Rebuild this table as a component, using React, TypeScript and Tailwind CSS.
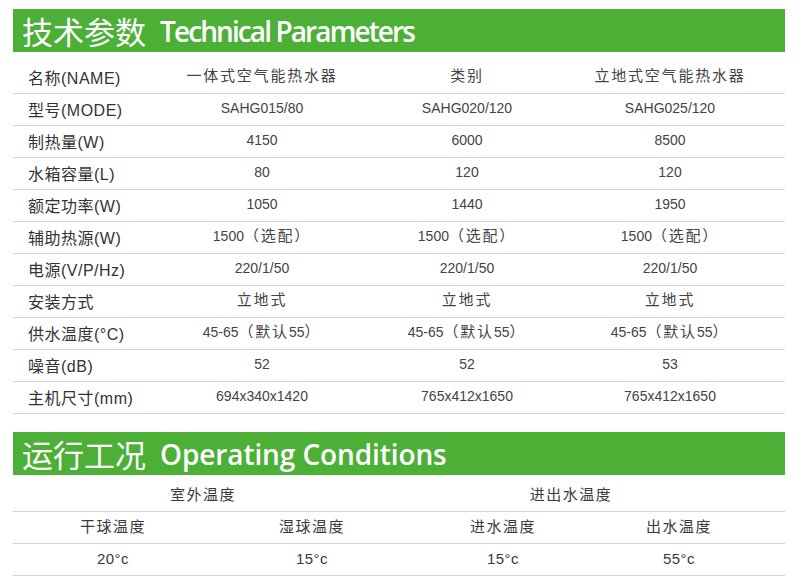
const body = '"Liberation Sans", "Noto Sans CJK SC", sans-serif';

type Row = { label: string; values: string[] };

const specs: Row[] = [
  { label: '名称(NAME)', values: ['一体式空气能热水器', '类别', '立地式空气能热水器'] },
  { label: '型号(MODE)', values: ['SAHG015/80', 'SAHG020/120', 'SAHG025/120'] },
  { label: '制热量(W)', values: ['4150', '6000', '8500'] },
  { label: '水箱容量(L)', values: ['80', '120', '120'] },
  { label: '额定功率(W)', values: ['1050', '1440', '1950'] },
  { label: '辅助热源(W)', values: ['1500（选配）', '1500（选配）', '1500（选配）'] },
  { label: '电源(V/P/Hz)', values: ['220/1/50', '220/1/50', '220/1/50'] },
  { label: '安装方式', values: ['立地式', '立地式', '立地式'] },
  { label: '供水温度(°C)', values: ['45-65（默认55）', '45-65（默认55）', '45-65（默认55）'] },
  { label: '噪音(dB)', values: ['52', '52', '53'] },
  { label: '主机尺寸(mm)', values: ['694x340x1420', '765x412x1650', '765x412x1650'] },
];

// cjk runs get a bit of letter spacing, latin runs stay tight
function Value({ text }: { text: string }) {
  const parts = text.split(/([\u3000-\u303f\u4e00-\u9fff\uff00-\uffef]+)/).filter(Boolean);
  return (
    <span className="pb-[2px] text-center text-[14px] text-[#444]">
      {parts.map((p, i) =>
        /[\u3000-\u303f\u4e00-\u9fff\uff00-\uffef]/.test(p) ? (
          <span key={i} className="text-[15px] tracking-[1.8px]">
            {p}
          </span>
        ) : (
          <span key={i}>{p}</span>
        ),
      )}
    </span>
  );
}

function SectionBar({ zh, en, track }: { zh: string; en: string; track: string }) {
  return (
    <div className="flex h-[43px] items-center gap-[14px] bg-[#4cb037] pl-[9px] text-white">
      <span className="text-[31px] leading-none" style={{ fontFamily: '"Noto Sans CJK SC", sans-serif' }}>
        {zh}
      </span>
      <span
        className={`text-[28px] font-semibold leading-none ${track}`}
        style={{ fontFamily: '"Open Sans", Lato, sans-serif' }}
      >
        {en}
      </span>
    </div>
  );
}

export default function App() {
  return (
    <div className="h-[580px] w-[802px] bg-white pl-[13px] pt-[9px]" style={{ fontFamily: body }}>
      <div className="w-[772px]">
        <SectionBar zh="技术参数" en="Technical Parameters" track="tracking-[-1.9px]" />

        <div className="mt-[10px]">
          {specs.map((r) => (
            <div
              key={r.label}
              className="grid h-[32px] grid-cols-[146px_206px_204px_202px] items-center border-b border-[#d4d4d4]"
            >
              <span className="pl-[15px] pt-[3px] text-[16px] tracking-[0.5px] text-[#333]">{r.label}</span>
              {r.values.map((v, i) => (
                <Value key={i} text={v} />
              ))}
            </div>
          ))}
        </div>

        <div className="mt-[18px]">
          <SectionBar zh="运行工况" en="Operating Conditions" track="tracking-[-0.1px]" />
        </div>

        <div className="mt-[5px] text-[15px] tracking-[1.5px] text-[#3a3a3a]">
          <div className="grid h-[32px] grid-cols-[380px_356px] items-center border-b border-[#d4d4d4]">
            <span className="text-center">室外温度</span>
            <span className="text-center">进出水温度</span>
          </div>
          <div className="grid h-[32px] grid-cols-[200px_198px_184px_168px] items-center border-b border-[#d4d4d4]">
            <span className="text-center">干球温度</span>
            <span className="text-center">湿球温度</span>
            <span className="text-center">进水温度</span>
            <span className="text-center">出水温度</span>
          </div>
          <div className="grid h-[32px] grid-cols-[200px_198px_184px_168px] items-center border-b border-[#d4d4d4] tracking-[0.5px]">
            <span className="text-center">20°c</span>
            <span className="text-center">15°c</span>
            <span className="text-center">15°c</span>
            <span className="text-center">55°c</span>
          </div>
        </div>
      </div>
    </div>
  );
}
